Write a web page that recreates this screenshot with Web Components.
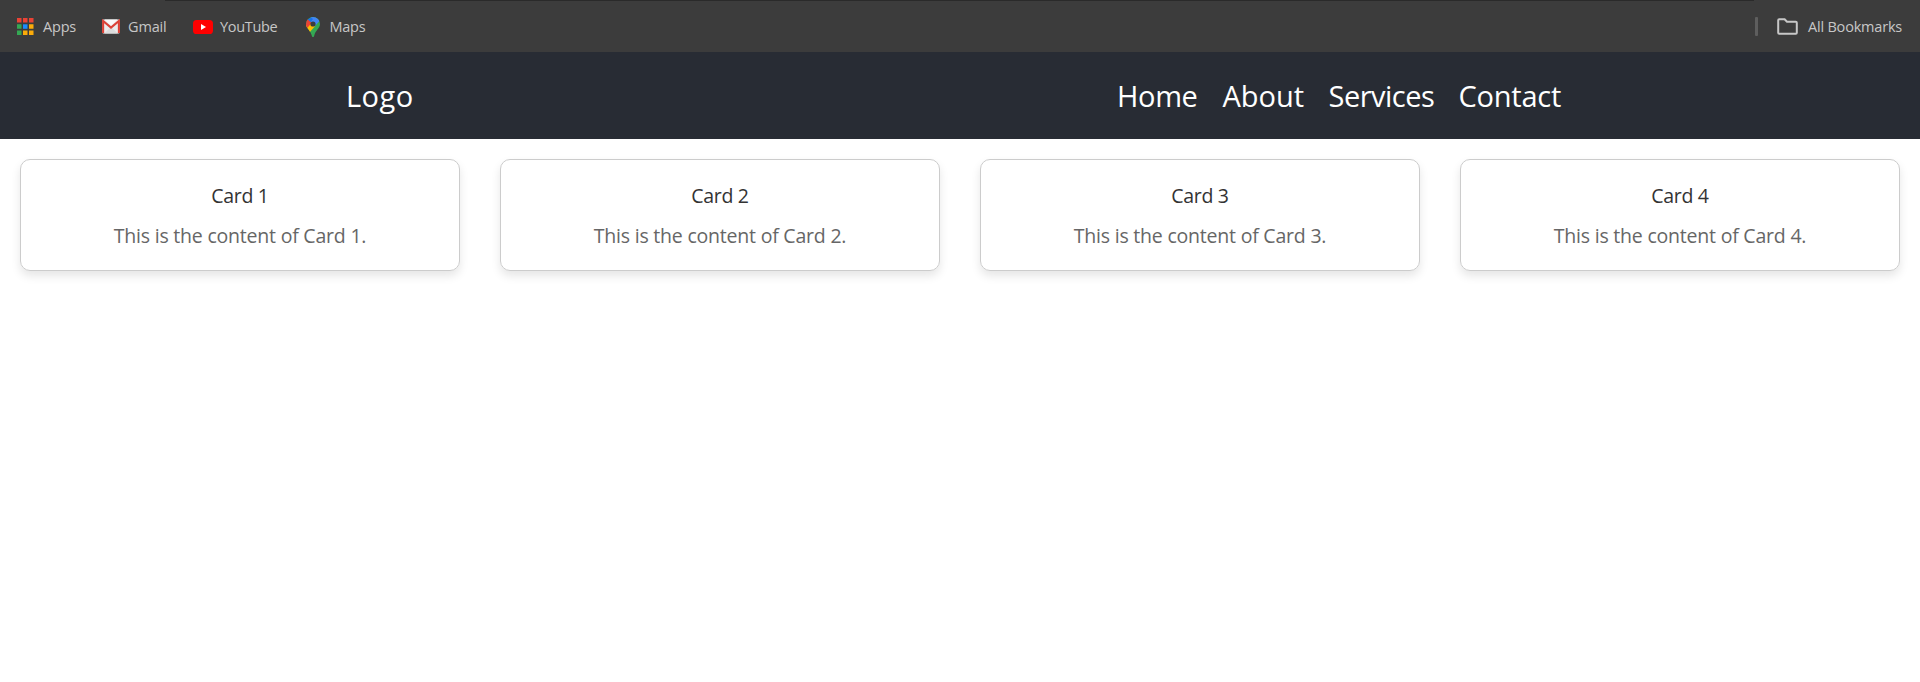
<!DOCTYPE html>
<html lang="en"><head><meta charset="utf-8"><title>Cards</title>
<style>body{margin:0;background:#fff;font-family:"Open Sans","Noto Sans",sans-serif}</style></head>
<body>
<bookmark-bar>
<bookmark-item icon="apps" style="--gap:9px;--w:85px;--ls:-.2px">Apps</bookmark-item>
<bookmark-item icon="gmail" style="--gap:8px;--w:91px;--ls:-.15px">Gmail</bookmark-item>
<bookmark-item icon="youtube" style="--gap:7px;--w:112.500px;--ls:-.33px">YouTube</bookmark-item>
<bookmark-item icon="maps" style="--gap:10px;--w:80px;--ls:-.25px">Maps</bookmark-item>
<bookmark-item slot="end" icon="folder" style="--gap:10px;--w:127px;--ls:-.2px">All Bookmarks</bookmark-item>
</bookmark-bar>
<nav-bar>
<nav-link slot="brand" style="--ls:.45px">Logo</nav-link>
<nav-link style="--w:105.500px;--ls:-.35px">Home</nav-link>
<nav-link style="--w:106px">About</nav-link>
<nav-link style="--w:130px;--ls:-.5px">Services</nav-link>
<nav-link style="--w:105px;--ls:-.22px">Contact</nav-link>
</nav-bar>
<card-grid>
<info-card heading="Card 1">This is the content of Card 1.</info-card>
<info-card heading="Card 2">This is the content of Card 2.</info-card>
<info-card heading="Card 3">This is the content of Card 3.</info-card>
<info-card heading="Card 4">This is the content of Card 4.</info-card>
</card-grid>
<script>
const define=(name,render)=>customElements.define(name,class extends HTMLElement{
  connectedCallback(){if(!this.shadowRoot)this.attachShadow({mode:'open'}).innerHTML=render(this)}
});
const icons={
apps:`<svg width="17" height="17" viewBox="0 0 17 17"><path fill="#ea4335" d="M0 0h4.5v4.5H0zM6 0h4.5v4.5H6zM12 0h4.5v4.5H12z"/><path fill="#34a853" d="M0 6.3h4.5v4.5H0zM0 12.5h4.5V17H0z"/><path fill="#1a8cff" d="M6 6.3h4.5v4.5H6z"/><path fill="#fbab09" d="M12 6.3h4.5v4.5H12zM6 12.5h4.5V17H6zM12 12.5h4.5V17H12z"/></svg>`,
gmail:`<svg width="18" height="15" viewBox="0 0 18 15"><rect y=".5" width="18" height="14" rx="1.4" fill="#ececec"/><path d="M2.2 14.5 9 8l6.8 6.5z" fill="#dcdcdc"/><path d="M1.1 14V2L9 8.6 16.9 2v12" fill="none" stroke="#dc4237" stroke-width="2.1"/><path d="M2.4.5h13.2L9 6.6z" fill="#fafafa"/></svg>`,
youtube:`<svg width="20" height="14" viewBox="0 0 20 14"><rect width="20" height="14" rx="3.6" fill="#f00"/><path d="M8 4v6l5-3z" fill="#fff"/></svg>`,
maps:`<svg width="14" height="20" viewBox="0 0 14 20"><defs><clipPath id="p"><path d="M7 0a7 7 0 0 1 7 7c0 4.6-4.8 6.5-5.8 11.7C8 19.5 7.7 20 7 20s-1-.5-1.2-1.3C4.800 13.500 0 11.600 0 7a7 7 0 0 1 7-7z"/></clipPath></defs><g clip-path="url(#p)"><path fill="#34a853" d="M0 0h14v20H0z"/><path fill="#fbbc04" d="M0 8 5 5l4.200 4L3 16H0z"/><path fill="#ea4335" d="M0 2h2l4 3.400L1.200 11H0z"/><path fill="#1a73e8" d="M1.500 2.300 7 0v4L4.500 5z"/><path fill="#4285f4" d="M4 0h10v3.500L9 9 4.600 5 7 2z"/></g><circle cx="7" cy="7" r="2.600" fill="#3c3c3c"/></svg>`,
folder:`<svg width="21" height="17" viewBox="0 0 21 17"><path d="M2.200 1.200h5.400l2.400 2.600h8.800q1 0 1 1v10q0 1-1 1H2.200q-1 0-1-1V2.200q0-1 1-1z" fill="none" stroke="#c7c7c7" stroke-width="2"/></svg>`};

define('bookmark-bar',()=>`<style>
:host{display:flex;align-items:center;box-sizing:border-box;height:52px;padding:1px 16px 0 17px;
 background:linear-gradient(#2a2a2a,#2a2a2a) 165px 0/1589px 1px no-repeat #3c3c3c;color:#c7c7c7}
.end{display:flex;align-items:center;margin-left:auto}
.rule{width:3px;height:19px;border-radius:1px;background:#5e5e5e;margin-right:19px}
</style><slot></slot><div class="end"><span class="rule"></span><slot name="end"></slot></div>`);

define('bookmark-item',el=>`<style>
:host{display:flex;align-items:center;gap:var(--gap);width:var(--w);font-size:14.5px;line-height:20px;letter-spacing:var(--ls);white-space:nowrap}
svg{display:block;flex:none}
</style>${icons[el.getAttribute('icon')]}<span><slot></slot></span>`);

define('nav-bar',()=>`<style>
:host{display:flex;justify-content:space-between;align-items:center;box-sizing:border-box;height:87px;padding:1px 356.500px 0 346px;background:#282c34;color:#fff}
nav{display:flex}
</style><slot name="brand"></slot><nav><slot></slot></nav>`);

define('nav-link',()=>`<style>
:host{display:block;width:var(--w,auto);font-size:29px;line-height:40px;letter-spacing:var(--ls,0);white-space:nowrap}
</style><slot></slot>`);

define('card-grid',()=>`<style>
:host{display:grid;grid-template-columns:repeat(4,1fr);gap:40px;padding:20px}
</style><slot></slot>`);

define('info-card',el=>`<style>
:host{display:flex;flex-direction:column;gap:10px;box-sizing:border-box;height:112px;padding:21px 20px;border:1px solid #ccc;border-radius:10px;
 box-shadow:0 5px 10px rgba(0,0,0,.1);text-align:center;font-size:19.5px;line-height:30px}
h3,p{margin:0;font-size:inherit;font-weight:400}
h3{color:#333;letter-spacing:-.3px}
p{color:#666;letter-spacing:-.21px}
</style><h3>${el.getAttribute('heading')}</h3><p><slot></slot></p>`);
</script>
</body></html>
